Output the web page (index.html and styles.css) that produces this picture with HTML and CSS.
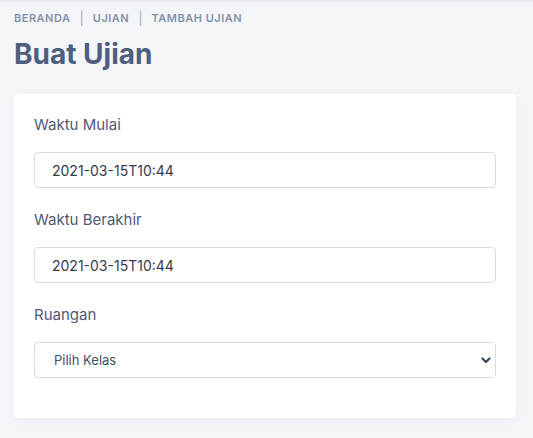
FILE: index.html
```html
<!DOCTYPE html>
<html lang="id">
<head>
  <meta charset="UTF-8">
  <title>Buat Ujian</title>
  <link rel="stylesheet" href="styles.css">
</head>
<body>
  <div class="page">
    <nav class="breadcrumb">
      <span>Beranda</span>
      <span class="sep">|</span>
      <span>Ujian</span>
      <span class="sep">|</span>
      <span>Tambah Ujian</span>
    </nav>
    <h1>Buat Ujian</h1>

    <div class="card">
      <div class="field">
        <label for="mulai">Waktu Mulai</label>
        <input type="text" id="mulai" value="2021-03-15T10:44">
      </div>
      <div class="field">
        <label for="akhir">Waktu Berakhir</label>
        <input type="text" id="akhir" value="2021-03-15T10:44">
      </div>
      <div class="field">
        <label for="ruang">Ruangan</label>
        <div class="select-wrap">
          <select id="ruang">
            <option value="">Pilih Kelas</option>
          </select>
          <svg class="chevron" width="10" height="7" viewBox="0 0 10 7">
            <path d="M1.5 1.5 L5 5 L8.5 1.5" fill="none" stroke="#3b4660" stroke-width="2.2" stroke-linecap="round" stroke-linejoin="round"/>
          </svg>
        </div>
      </div>
    </div>
  </div>
</body>
</html>
```

FILE: styles.css
```css
body {
  margin: 0;
  font-family: Inter, "Noto Sans", sans-serif;
  background: #f3f5f9;
  border-top: 2px solid #e6e9f0;
}
.page {
  padding: 9px 17px 20px 14px;
}
.breadcrumb {
  display: flex;
  align-items: center;
  gap: 9px;
  font-size: 11px;
  font-weight: 600;
  letter-spacing: 0.5px;
  text-transform: uppercase;
  color: #8592a6;
  height: 14px;
}
.sep {
  font-weight: 400;
  font-size: 13px;
  letter-spacing: 0;
  color: #a3aec0;
}
h1 {
  margin: 12px 0 0;
  font-size: 28px;
  font-weight: 700;
  color: #505d7f;
  line-height: 34px;
}
.card {
  margin-top: 23px;
  background: white;
  border-radius: 4px;
  box-shadow: 0 2px 10px rgba(60, 72, 100, 0.05);
  padding: 21px 20px 40px;
}
.field + .field {
  margin-top: 22px;
}
label {
  display: block;
  font-size: 15px;
  color: #4e5877;
  line-height: 20px;
  margin-bottom: 17px;
}
input, select {
  box-sizing: border-box;
  width: 100%;
  height: 36px;
  border: 1px solid #d8dce7;
  border-radius: 4px;
  background: white;
  font-family: Inter, "Noto Sans", sans-serif;
  color: #343b4e;
  outline: none;
}
input {
  padding: 0 17px;
  font-size: 14px;
}
.select-wrap {
  position: relative;
}
select {
  appearance: none;
  padding: 0 19px;
  font-size: 13px;
  color: #474e64;
}
.chevron {
  position: absolute;
  right: 5px;
  top: 15px;
  pointer-events: none;
}
```
